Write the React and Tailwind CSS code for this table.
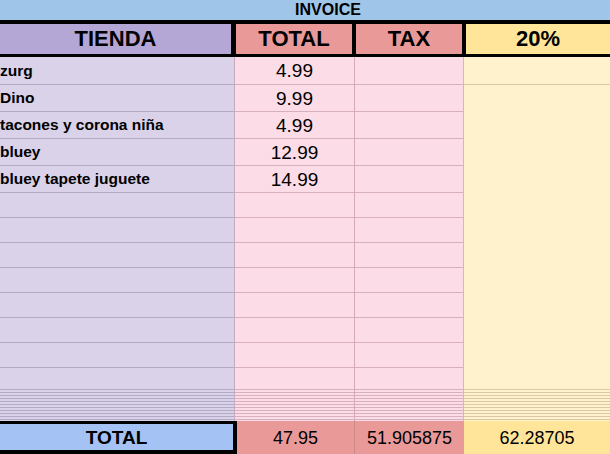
import React from "react";

const items = [
  ["zurg", "4.99"],
  ["Dino", "9.99"],
  ["tacones y corona niña", "4.99"],
  ["bluey", "12.99"],
  ["bluey tapete juguete", "14.99"],
];

const heights = [28, 27, 27, 27, 27, 25, 25, 25, 25, 25, 25, 25, 22, 3, 3, 3, 3, 3, 3, 3, 3, 3, 3, 1];

export default function App() {
  return (
    <div
      className="w-[610px] h-[454px] overflow-hidden bg-white text-black"
      style={{ fontFamily: '"Liberation Sans", Arial, sans-serif' }}
    >
      {/* title */}
      <div className="h-[20px] bg-[#9fc5e8] flex items-center justify-center text-[16px] font-bold leading-none pl-[46px]">
        INVOICE
      </div>
      {/* header */}
      <div className="h-[37px] bg-black pt-[4px] pb-[3px] flex text-[22px] font-bold leading-none">
        <div className="w-[231px] bg-[#b4a7d6] flex items-center justify-center">TIENDA</div>
        <div className="w-[5px]" />
        <div className="w-[116px] bg-[#ea9999] flex items-center justify-center">TOTAL</div>
        <div className="w-[4px]" />
        <div className="w-[106px] bg-[#ea9999] flex items-center justify-center">TAX</div>
        <div className="w-[4px]" />
        <div className="flex-1 bg-[#ffe599] flex items-center justify-center">20%</div>
      </div>
      {/* body */}
      <div className="flex">
        <div className="w-[235px] border-r border-[#c8aac0] bg-[#d9d2e9] flex flex-col">
          {heights.map((h, i) => (
            <div
              key={i}
              style={{ height: h }}
              className={`${i < heights.length - 1 ? "border-b" : ""} border-[#b3abc5] flex items-center pl-0 text-[15.5px] font-bold leading-none overflow-hidden whitespace-nowrap`}
            >
              {items[i] ? items[i][0] : ""}
            </div>
          ))}
        </div>
        <div className="w-[120px] border-r border-[#d5a9b8] bg-[#fcdce6] flex flex-col">
          {heights.map((h, i) => (
            <div
              key={i}
              style={{ height: h }}
              className={`${i < heights.length - 1 ? "border-b" : ""} border-[#d8afbf] flex items-center justify-center text-[19px] leading-none overflow-hidden`}
            >
              {items[i] ? items[i][1] : ""}
            </div>
          ))}
        </div>
        <div className="w-[109px] border-r border-[#d6bca4] bg-[#fcdce6] flex flex-col">
          {heights.map((h, i) => (
            <div
              key={i}
              style={{ height: h }}
              className={`${i < heights.length - 1 ? "border-b" : ""} border-[#d8afbf]`}
            />
          ))}
        </div>
        <div className="flex-1 bg-[#fff2cc] flex flex-col">
          <div className="h-[28px] border-b border-[#d9c8a2]" />
          <div className="h-[305px] border-b border-[#d9c8a2]" />
          {heights.slice(13).map((h, i) => (
            <div
              key={i}
              style={{ height: h }}
              className={`${i < heights.length - 14 ? "border-b" : ""} border-[#d9c8a2]`}
            />
          ))}
        </div>
      </div>
      {/* footer */}
      <div className="h-[33px] flex text-[18px] leading-none">
        <div className="w-[237px] bg-[#a4c2f4] border-t-[3px] border-b-4 border-r-4 border-black flex items-center justify-center font-bold text-[19px]">
          TOTAL
        </div>
        <div className="w-[118px] bg-[#ea9999] border-r border-[#c98a8a] flex items-center justify-center">47.95</div>
        <div className="w-[109px] bg-[#ea9999] flex items-center justify-center">51.905875</div>
        <div className="flex-1 bg-[#ffe599] flex items-center justify-center">62.28705</div>
      </div>
    </div>
  );
}
